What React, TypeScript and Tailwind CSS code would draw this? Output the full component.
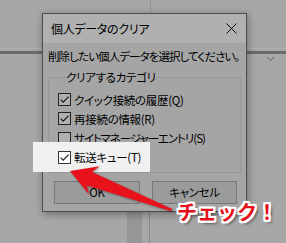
import React from 'react';

function CheckRow({ checked, label, lifted, tight }: { checked: boolean; label: string; lifted?: boolean; tight?: boolean }) {
  return (
    <div className={`flex items-center gap-[3px] h-[13px] ${lifted ? 'relative z-20' : ''}`}>
      <span className="w-[13px] h-[13px] shrink-0 border border-[#333333] bg-white flex items-center justify-center">
        {checked && (
          <svg width="11" height="11" viewBox="0 0 11 11">
            <path d="M1.6 5.6 L4.2 8.2 L9.6 2.6" stroke="#222" strokeWidth="1.2" fill="none" />
          </svg>
        )}
      </span>
      <span className={`leading-[14px] whitespace-nowrap [word-spacing:-2px] ${tight ? 'tracking-[-1px]' : ''}`}>{label}</span>
    </div>
  );
}

export default function App() {
  return (
    <div className="relative w-[286px] h-[243px] overflow-hidden bg-[#f2f2f2] text-[11.5px] tracking-[-0.3px] text-black [font-family:'Noto_Sans_CJK_JP',sans-serif] [font-feature-settings:'palt']">
      {/* background window bits */}
      <div className="absolute left-[150px] top-0 w-px h-[14px] bg-[#d6d6d6]" />
      <div className="absolute left-0 right-0 top-[48px] h-px bg-white" />
      <div className="absolute left-0 right-0 top-[51px] h-[3px] bg-[#9c9c9c]" />
      <svg className="absolute left-[266px] top-[56px]" width="9" height="6" viewBox="0 0 9 6">
        <path d="M1 1 L4.5 4.5 L8 1" stroke="#8a8a8a" strokeWidth="1" fill="none" />
      </svg>
      <div className="absolute left-[127px] top-[205px] bottom-0 w-[15px] bg-[#dadada]" />
      <div className="absolute left-[149px] top-[205px] bottom-0 w-px bg-[#c4c4c4]" />

      {/* dialog */}
      <div className="absolute left-[42px] top-[13px] w-[205px] h-[199px] border border-[#707070] bg-[#f0f0f0] flex flex-col shadow-[1px_2px_8px_rgba(0,0,0,0.35)]">
        <div className="h-[29px] bg-white flex items-center justify-between pl-[8px] pr-[9px]">
          <span className="leading-[14px] text-[12px]">個人データのクリア</span>
          <svg width="11" height="11" viewBox="0 0 11 11">
            <path d="M0.5 0.5 L10.5 10.5 M10.5 0.5 L0.5 10.5" stroke="#111" strokeWidth="1" fill="none" />
          </svg>
        </div>
        <div className="flex-1 flex flex-col px-[5px] pt-[6px]">
          <p className="leading-[14px] whitespace-nowrap tracking-[-0.9px]">削除したい個人データを選択してください。</p>
          <fieldset className="mt-[7px] border border-[#dcdcdc] pl-[9px] pt-[9px] pb-[8px]">
            <legend className="ml-[7px] px-[1px] leading-[14px]">クリアするカテゴリ</legend>
            <div className="flex flex-col gap-[6.3px]">
              <CheckRow checked label="クイック接続の履歴(Q)" />
              <CheckRow checked label="再接続の情報(R)" />
              <CheckRow checked={false} label="サイト マネージャー エントリ(S)" tight />
              <CheckRow checked label="転送キュー(T)" lifted />
            </div>
          </fieldset>
          <div className="mt-[8px] flex gap-[12px] pl-[6px]">
            <button className="w-[86px] h-[23px] border border-[#adadad] bg-[#e1e1e1] leading-[12px]">OK</button>
            <button className="w-[85px] h-[23px] border border-[#adadad] bg-[#e1e1e1] leading-[12px]">キャンセル</button>
          </div>
        </div>
      </div>

      {/* dim layer with spotlight */}
      <div className="absolute left-[33px] top-[142px] w-[117px] h-[30px] z-10 bg-[#f0f0f0] shadow-[0_0_0_400px_rgba(0,0,0,0.31)]" />

      {/* arrow */}
      <svg className="absolute inset-0 z-30 pointer-events-none drop-shadow-[1px_1px_1px_rgba(0,0,0,0.35)]" width="286" height="243" viewBox="0 0 286 243">
        <g transform="translate(70 171) rotate(21.1)">
          <polygon points="0,0 26,-15 21,-7 109,-1.2 109,1.2 21,7.5 26,15" fill="#e8121c" />
        </g>
      </svg>

      <span className="absolute left-[177px] top-[202px] z-30 text-[20px] font-bold leading-[20px] tracking-normal text-[#e3101a] [font-feature-settings:normal] [text-shadow:2px_0_0_#fff,-2px_0_0_#fff,0_2px_0_#fff,0_-2px_0_#fff,2px_2px_0_#fff,-2px_-2px_0_#fff,2px_-2px_0_#fff,-2px_2px_0_#fff,3px_3px_3px_rgba(0,0,0,0.55)]">
        チェック！
      </span>
    </div>
  );
}
